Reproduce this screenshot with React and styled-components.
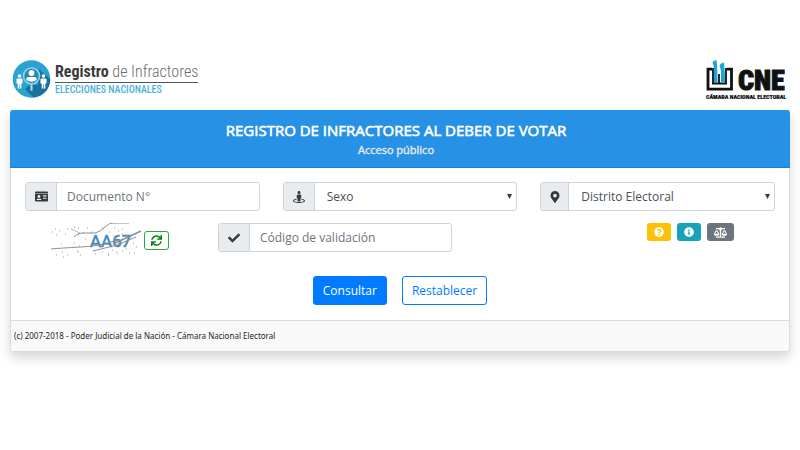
import React from "react";
import styled, { createGlobalStyle } from "styled-components";
import {
  FaIdCard,
  FaStreetView,
  FaMapMarkerAlt,
  FaCheck,
  FaSync,
  FaQuestionCircle,
  FaInfoCircle,
  FaBalanceScale,
} from "react-icons/fa";

const GlobalStyle = createGlobalStyle`
  * { box-sizing: border-box; }
  body {
    margin: 0;
    background: #fff;
    color: #212529;
    font-family: "Open Sans", sans-serif;
    font-size: 12px;
  }
  input, select, button { font-family: inherit; }
`;

const Page = styled.div`
  padding: 58px 10px 24px;
`;

const Masthead = styled.header`
  display: flex;
  justify-content: space-between;
  align-items: flex-start;
  height: 52px;
  padding: 0 2px;
`;

const RegistryBrand = styled.a`
  display: flex;
  gap: 4px;
  color: inherit;
  text-decoration: none;
`;

const RegistryWords = styled.div`
  padding-top: 4px;
  font-family: "Roboto Condensed", "Liberation Sans Narrow", "Liberation Sans", sans-serif;
`;

const RegistryName = styled.div`
  border-bottom: 1px solid #555;
  color: #6b6b6b;
  font-size: 16px;
  font-weight: 300;
  line-height: 20px;
  white-space: nowrap;

  strong { color: #3b3b3d; font-weight: 700; }
`;

const RegistryTag = styled.div`
  padding-top: 2px;
  color: #4ab0dc;
  font-size: 10px;
  font-weight: 500;
  line-height: 10px;
`;

const CourtBrand = styled.a`
  display: block;
  color: #111;
  text-decoration: none;
`;

const Card = styled.main`
  border: 1px solid #dcdcdc;
  border-top: 0;
  border-radius: 3px;
  box-shadow: 0 6px 12px rgba(0, 0, 0, 0.16);
`;

const CardHeader = styled.div`
  padding: 10px 20px 8px 12px;
  margin: 0 -1px;
  background: #2791e6;
  border-bottom: 1px solid #1b7fd2;
  border-radius: 3px 3px 0 0;
  color: #fff;
  text-align: center;
`;

const Title = styled.h1`
  margin: 0;
  font-size: 15px;
  font-weight: 400;
  line-height: 20px;
  -webkit-text-stroke: 0.6px #fff;
`;

const Subtitle = styled.p`
  margin: 0;
  color: #e4e8ec;
  font-size: 11px;
  line-height: 19px;
  -webkit-text-stroke: 0.4px #e4e8ec;
`;

const Form = styled.form`
  display: flex;
  flex-direction: column;
  gap: 12px;
  padding: 14px 14px 15px;
`;

const FieldRow = styled.div`
  display: grid;
  grid-template-columns: repeat(3, 1fr);
  gap: 23px;
`;

const CheckRow = styled.div`
  display: grid;
  grid-template-columns: 170fr 234fr 107fr 170fr;
  column-gap: 23px;
`;

const InputGroup = styled.div`
  display: flex;
  height: 29px;
  border: 1px solid #ced4da;
  border-radius: 3px;
  overflow: hidden;
  background: #fff;
`;

const Addon = styled.label`
  display: flex;
  align-items: center;
  justify-content: center;
  flex: none;
  width: ${(p) => p.$width || 31}px;
  border-right: 1px solid #ced4da;
  background: #e9ecef;
  color: #343a40;
  font-size: ${(p) => p.$size || 12}px;
`;

const TextInput = styled.input`
  flex: 1;
  min-width: 0;
  padding: 0 10px;
  border: 0;
  background: transparent;
  color: #495057;
  font-size: 12px;

  &::placeholder { color: #6c757d; opacity: 1; }
`;

const SelectBox = styled.div`
  display: flex;
  flex: 1;
  align-items: center;
  min-width: 0;
  padding-right: 4px;
`;

const Select = styled.select`
  flex: 1;
  min-width: 0;
  height: 100%;
  padding: 0 0 0 12px;
  border: 0;
  appearance: none;
  background: transparent;
  color: #495057;
  font-size: 12px;
`;

const CaptchaBox = styled.div`
  display: flex;
  align-items: flex-start;
  justify-content: center;
  gap: 2px;
`;

const RefreshButton = styled.button`
  display: flex;
  align-items: center;
  justify-content: center;
  width: 25px;
  height: 19px;
  margin-top: 8px;
  padding: 0;
  border: 1px solid #28a745;
  border-radius: 3px;
  background: #fff;
  color: #068306;
  font-size: 11px;
`;

const HelpButtons = styled.div`
  grid-column: 4;
  display: flex;
  justify-content: center;
  gap: 6px;
`;

const HelpButton = styled.button`
  display: flex;
  align-items: center;
  justify-content: center;
  height: 18px;
  padding: 0 7px;
  border: 0;
  border-radius: 3px;
  background: ${(p) => p.$color};
  color: #fff;
  font-size: ${(p) => p.$size || 10}px;
`;

const Actions = styled.div`
  display: flex;
  justify-content: center;
  gap: 15px;
  padding-top: 5px;
`;

const ActionButton = styled.button`
  height: 29px;
  padding: 0 9px;
  border: 1px solid #007bff;
  border-radius: 3px;
  background: ${(p) => (p.$solid ? "#007bff" : "#fff")};
  color: ${(p) => (p.$solid ? "#fff" : "#007bff")};
  font-size: 12px;
`;

const CardFooter = styled.footer`
  padding: 7px 3px;
  border-top: 1px solid #dcdcdc;
  background: #f9f9f9;
  border-radius: 0 0 3px 3px;
  font-family: "Noto Sans", "Open Sans", sans-serif;
  font-size: 8px;
  line-height: 16px;
`;

function PersonGlyph({ x, y }) {
  return (
    <g transform={`translate(${x} ${y})`} fill="#fff">
      <circle cx="0" cy="0" r="1.8" />
      <path d="M-2 2.4h4q1 0 1 1v4h-1.2v5.2h-1.5v-4h-.6v4h-1.5V7.4H-3v-4q0-1 1-1z" />
    </g>
  );
}

function RegistryLogo() {
  return (
    <svg width="39" height="40" viewBox="0 0 39 40" aria-hidden="true">
      <defs>
        <clipPath id="disc"><circle cx="19.500" cy="21" r="18.800" /></clipPath>
      </defs>
      <circle cx="19.500" cy="21" r="18.800" fill="#2ba3cf" />
      <path clipPath="url(#disc)" d="M27 11L40 24V40H22L13 31l5-5 8 1zM33 16l8 8v15h-8l-3-9z" fill="#18739b" />
      <PersonGlyph x="7.500" y="18" />
      <PersonGlyph x="31.500" y="18" />
      <circle cx="19.500" cy="18" r="8" fill="#2489b3" stroke="#8ed3eb" strokeWidth="1.600" />
      <circle cx="19.500" cy="15" r="2.900" fill="#fff" />
      <path d="M14.300 22v-1q0-2 2.200-2h6q2.200 0 2.200 2v1q-5.200 3.400-10.400 0z" fill="#fff" />
      <path d="M19.500 27v5" stroke="#9bd8ec" strokeWidth="2.200" strokeLinecap="round" />
    </svg>
  );
}

function CourtLogo() {
  return (
    <svg width="83" height="43" viewBox="0 0 83 43" role="img" aria-label="CNE Cámara Nacional Electoral">
      <path d="M7 11.200H3V31.200H26.500V11.200H21.500" fill="none" stroke="#111" strokeWidth="2.800" />
      <path d="M8 10V26M14 16V26M21 10V26M7 25.500H22" fill="none" stroke="#111" strokeWidth="1.800" />
      <path d="M7.500 5Q8 2.500 11.500 2Q12.500 8 12.500 24.500H9V11Q9 8 7.500 5z" fill="#1ba5dc" />
      <path d="M14.500 8Q15 5 18.800 4.500Q20 12 20 24.500H16V14Q16 11 14.500 8z" fill="#1ba5dc" />
      <text x="33" y="32" fontFamily="Roboto Condensed, Liberation Sans Narrow, Liberation Sans, sans-serif" fontWeight="900" fontSize="28" fill="#111" stroke="#111" strokeWidth="1">CNE</text>
      <text x="1" y="41" fontFamily="Roboto Condensed, Liberation Sans Narrow, sans-serif" fontWeight="900" fontSize="6" fill="#111" stroke="#111" strokeWidth=".2">CÁMARA NACIONAL ELECTORAL</text>
    </svg>
  );
}

function CaptchaImage() {
  return (
    <svg width="91" height="36" viewBox="0 0 91 36" role="img" aria-label="AA67">
      <text x="39" y="24" fontFamily="Roboto, Liberation Sans, sans-serif" fontSize="17" fill="#4389b9" stroke="#4389b9" strokeWidth=".6">AA67</text>
      <g fill="none" stroke="#8e8e8e" strokeWidth="1">
        <path d="M0 26q10-1 30-2t36-7" />
        <path d="M23 14q3-4 8-4h13q5-1 10-6t9-4h15" />
        <path d="M42 28l24-6 19-8" />
        <path d="M62 21L90 8" strokeWidth="1.500" />
        <path d="M20 6l9 4" opacity=".6" />
      </g>
      <path
        d="M1 9h1m2-3h1m3 2h1m-4 4h1m10-6h1m-3 5h1m8-7h1m3 1h1m4 5h1m3-5h1m-10 7h1m12-3h1m10-4h1m6 4h1m4-4h1m3 3h1m3-2h1m-10 7h1m8-2h1m4 3h1M5 32h1m5-3h1m4 3h1m-7-11h1m12-1h1m2 8h1m2 4h1m-3-3h1m6-13h1m-7 7h1m15 8h1m6-2h1m5 3h1m3-5h1m4 4h1m4-3h1m3-2h1m2 4h1m4 0h1m-17-10h1m4 3h1m9-3h1m2 4h1M12 34h1m52-5h1m-9 2h1"
        stroke="#9a9a9a"
        strokeWidth="1"
      />
    </svg>
  );
}

function SelectField({ id, label, icon, addonWidth, size }) {
  return (
    <InputGroup>
      <Addon htmlFor={id} aria-label={label} $width={addonWidth} $size={size}>{icon}</Addon>
      <SelectBox>
        <Select id={id}><option>{label}</option></Select>
        <svg width="5" height="6" viewBox="0 0 5 6" aria-hidden="true"><path d="M0 0h5L2.500 5z" fill="#343a40" /></svg>
      </SelectBox>
    </InputGroup>
  );
}

function TextField({ id, label, icon, size }) {
  return (
    <InputGroup>
      <Addon htmlFor={id} aria-label={label} $size={size}>{icon}</Addon>
      <TextInput id={id} placeholder={label} />
    </InputGroup>
  );
}

export default function App() {
  return (
    <>
      <GlobalStyle />
      <Page>
        <Masthead>
          <RegistryBrand href="#">
            <RegistryLogo />
            <RegistryWords>
              <RegistryName><strong>Registro</strong> de Infractores</RegistryName>
              <RegistryTag>ELECCIONES NACIONALES</RegistryTag>
            </RegistryWords>
          </RegistryBrand>
          <CourtBrand href="#"><CourtLogo /></CourtBrand>
        </Masthead>
        <Card>
          <CardHeader>
            <Title>REGISTRO DE INFRACTORES AL DEBER DE VOTAR</Title>
            <Subtitle>Acceso público</Subtitle>
          </CardHeader>
          <Form onSubmit={(e) => e.preventDefault()}>
            <FieldRow>
              <TextField id="documento" label="Documento N°" icon={<FaIdCard />} size={13} />
              <SelectField id="sexo" label="Sexo" icon={<FaStreetView />} />
              <SelectField id="distrito" label="Distrito Electoral" icon={<FaMapMarkerAlt />} addonWidth={28} />
            </FieldRow>
            <CheckRow>
              <CaptchaBox>
                <CaptchaImage />
                <RefreshButton type="button" aria-label="Actualizar código"><FaSync /></RefreshButton>
              </CaptchaBox>
              <TextField id="codigo" label="Código de validación" icon={<FaCheck />} />
              <HelpButtons>
                <HelpButton type="button" $color="#ffc107" aria-label="Ayuda"><FaQuestionCircle /></HelpButton>
                <HelpButton type="button" $color="#17a2b8" aria-label="Información"><FaInfoCircle /></HelpButton>
                <HelpButton type="button" $color="#6c757d" $size={13} aria-label="Legislación"><FaBalanceScale /></HelpButton>
              </HelpButtons>
            </CheckRow>
            <Actions>
              <ActionButton type="submit" $solid>Consultar</ActionButton>
              <ActionButton type="reset">Restablecer</ActionButton>
            </Actions>
          </Form>
          <CardFooter>(c) 2007-2018 - Poder Judicial de la Nación - Cámara Nacional Electoral</CardFooter>
        </Card>
      </Page>
    </>
  );
}
